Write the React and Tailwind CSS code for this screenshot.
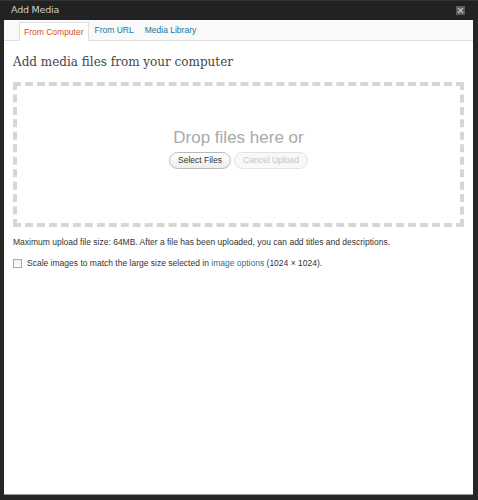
import React from 'react';

const App = () => {
    return (
        <div className="w-[478px] h-[500px] bg-[#262626] flex flex-col font-['Liberation_Sans',Arial,sans-serif]">
            {/* Title bar */}
            <div className="h-[20px] shrink-0 flex items-center justify-between pl-[11px] pr-[13px] bg-[#222222] border-t border-[#333]">
                <span className="text-[9.5px] text-[#cfcfcf] font-['DejaVu_Sans',sans-serif] tracking-[-0.2px]">Add Media</span>
                <span className="w-[9px] h-[9px] bg-[#5a5a5a] flex items-center justify-center">
                    <svg width="7" height="7" viewBox="0 0 7 7">
                        <path d="M1 1 L6 6 M6 1 L1 6" stroke="#bdbdbd" strokeWidth="1.4" />
                    </svg>
                </span>
            </div>

            {/* Panel */}
            <div className="flex-1 ml-[4px] mr-[5px] mb-[5px] bg-white flex flex-col border-b border-[#999]">
                {/* Tabs */}
                <div className="h-[21px] shrink-0 bg-[#f9f9f9] border-b border-[#dfdfdf] flex items-end pl-[15px] gap-[1px] text-[8.5px]">
                    <div className="h-[19px] px-[4px] flex items-center bg-white border border-b-0 border-[#dfdfdf] -mb-px text-[#d54e21]">From Computer</div>
                    <div className="h-[19px] px-[5px] flex items-center text-[#21759b]">From URL</div>
                    <div className="h-[19px] px-[5px] flex items-center text-[#21759b]">Media Library</div>
                </div>

                {/* Content */}
                <div className="px-[9px] pt-[13px]">
                    <h3 className="text-[12px] leading-[16px] text-[#464646] font-['DejaVu_Serif',Georgia,serif]">Add media files from your computer</h3>

                    <div className="mt-[12px] h-[145px] border-[4px] border-dashed border-[#d6d6d6] flex flex-col items-center pt-[42px]">
                        <p className="text-[17px] leading-[20px] text-[#a9a9a9]">Drop files here or</p>
                        <div className="mt-[4px] flex gap-[3px]">
                            <button className="h-[17px] w-[62px] rounded-full border border-[#bbb] bg-gradient-to-b from-white to-[#ededed] text-[8.5px] text-[#333]">Select Files</button>
                            <button className="h-[17px] w-[74px] rounded-full border border-[#e2e2e2] bg-[#f8f8f8] text-[8.5px] text-[#c4c4c4]">Cancel Upload</button>
                        </div>
                    </div>

                    <p className="mt-[9px] text-[8.5px] text-[#333]">
                        Maximum upload file size: 64MB. After a file has been uploaded, you can add titles and descriptions.
                    </p>

                    <label className="mt-[8px] flex items-center gap-[5px] text-[8.5px] text-[#333]">
                        <span className="w-[9px] h-[9px] border border-[#aaa] bg-gradient-to-b from-[#eee] to-white shrink-0" />
                        <span>
                            Scale images to match the large size selected in <span className="text-[#21759b]">image options</span> (1024 × 1024).
                        </span>
                    </label>
                </div>
            </div>
        </div>
    );
};

export default App;
